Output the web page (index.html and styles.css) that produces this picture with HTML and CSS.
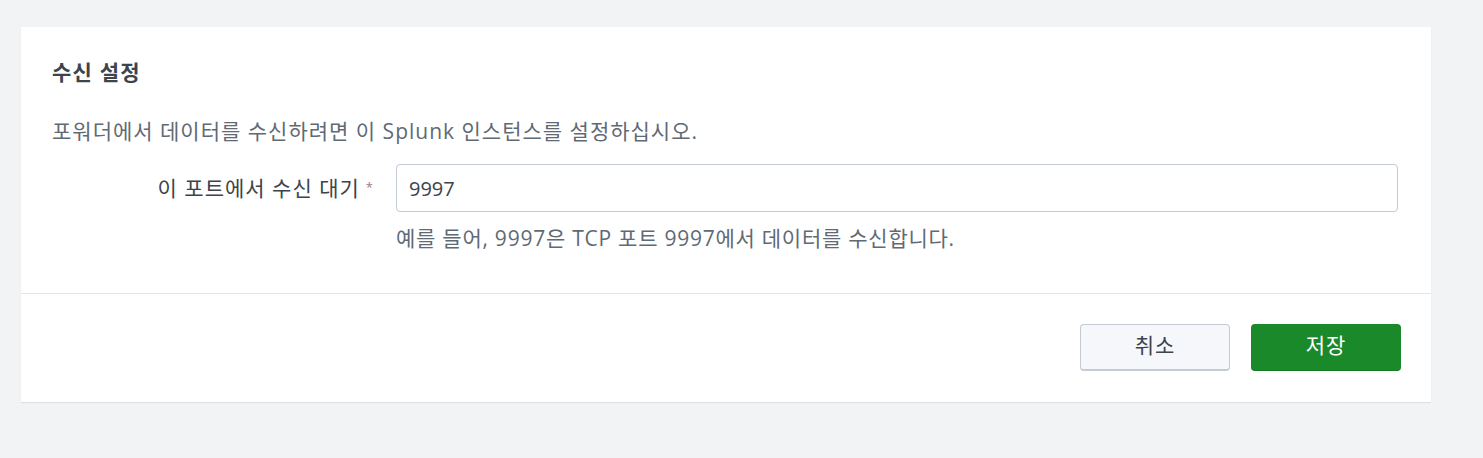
FILE: index.html
```html
<!DOCTYPE html>
<html lang="ko">
<head>
<meta charset="utf-8">
<link rel="stylesheet" href="styles.css">
</head>
<body>
<div class="page">
  <div class="card">
    <div class="card-body">
      <h2 class="title">수신 설정</h2>
      <p class="desc">포워더에서 데이터를 수신하려면 이 Splunk 인스턴스를 설정하십시오.</p>
      <div class="form-row">
        <label class="label">이 포트에서 수신 대기<span class="req">*</span></label>
        <div class="field">
          <input class="input" type="text" value="9997">
          <div class="help">예를 들어, 9997은 TCP 포트 9997에서 데이터를 수신합니다.</div>
        </div>
      </div>
    </div>
    <div class="card-footer">
      <button class="btn btn-cancel">취소</button>
      <button class="btn btn-save">저장</button>
    </div>
  </div>
</div>
</body>
</html>
```
FILE: styles.css
```css
* { box-sizing: border-box; }
html, body { margin: 0; padding: 0; }
body {
  background: #f2f3f5;
  font-family: "Open Sans", "Noto Sans CJK KR", sans-serif;
  color: #3c444d;
  width: 1483px;
  height: 458px;
  overflow: hidden;
}
.page { padding: 27px 0 0 21px; }
.card {
  width: 1410px;
  background: #fff;
  box-shadow: 0 1px 1px rgba(0,0,0,0.08);
}
.card-body {
  padding: 30px 33px 40px 31px;
  border-bottom: 1px solid #e1e4e8;
}
.title {
  margin: 0;
  font-size: 21px;
  font-weight: 700;
  letter-spacing: 1.2px;
  line-height: 30px;
  color: #3c444d;
}
.desc {
  margin: 29px 0 0;
  font-size: 21px;
  letter-spacing: 1px;
  line-height: 30px;
  color: #5f6a75;
}
.form-row {
  display: flex;
  margin-top: 18px;
}
.label {
  width: 344px;
  text-align: right;
  padding-right: 23px;
  font-size: 21px;
  letter-spacing: 1px;
  line-height: 46px;
  color: #3c444d;
  flex: none;
}
.req {
  color: #9a7b88;
  font-size: 13px;
  margin-left: 6px;
  vertical-align: 4px;
  letter-spacing: 0;
}
.field { flex: 1; }
.input {
  display: block;
  width: 100%;
  height: 48px;
  border: 1px solid #c3cbd4;
  border-radius: 4px;
  padding: 0 12px;
  font-family: inherit;
  font-size: 20px;
  color: #3c444d;
  outline: none;
}
.help {
  margin-top: 11px;
  font-size: 21px;
  letter-spacing: 0.75px;
  line-height: 30px;
  color: #5f6a75;
}
.card-footer {
  display: flex;
  justify-content: flex-end;
  gap: 21px;
  padding: 30px 30px 31px 0;
}
.btn {
  width: 150px;
  height: 47px;
  border-radius: 4px;
  font-family: inherit;
  font-size: 21px;
  letter-spacing: 1px;
  padding: 0 0 6px;
  cursor: pointer;
}
.btn-cancel {
  background: #f5f7fa;
  border: 1px solid #c3cbd4;
  border-bottom-width: 2px;
  color: #3c444d;
}
.btn-save {
  background: #1a8929;
  border: none;
  border-bottom: 1px solid #177a25;
  color: #fff;
}
```
